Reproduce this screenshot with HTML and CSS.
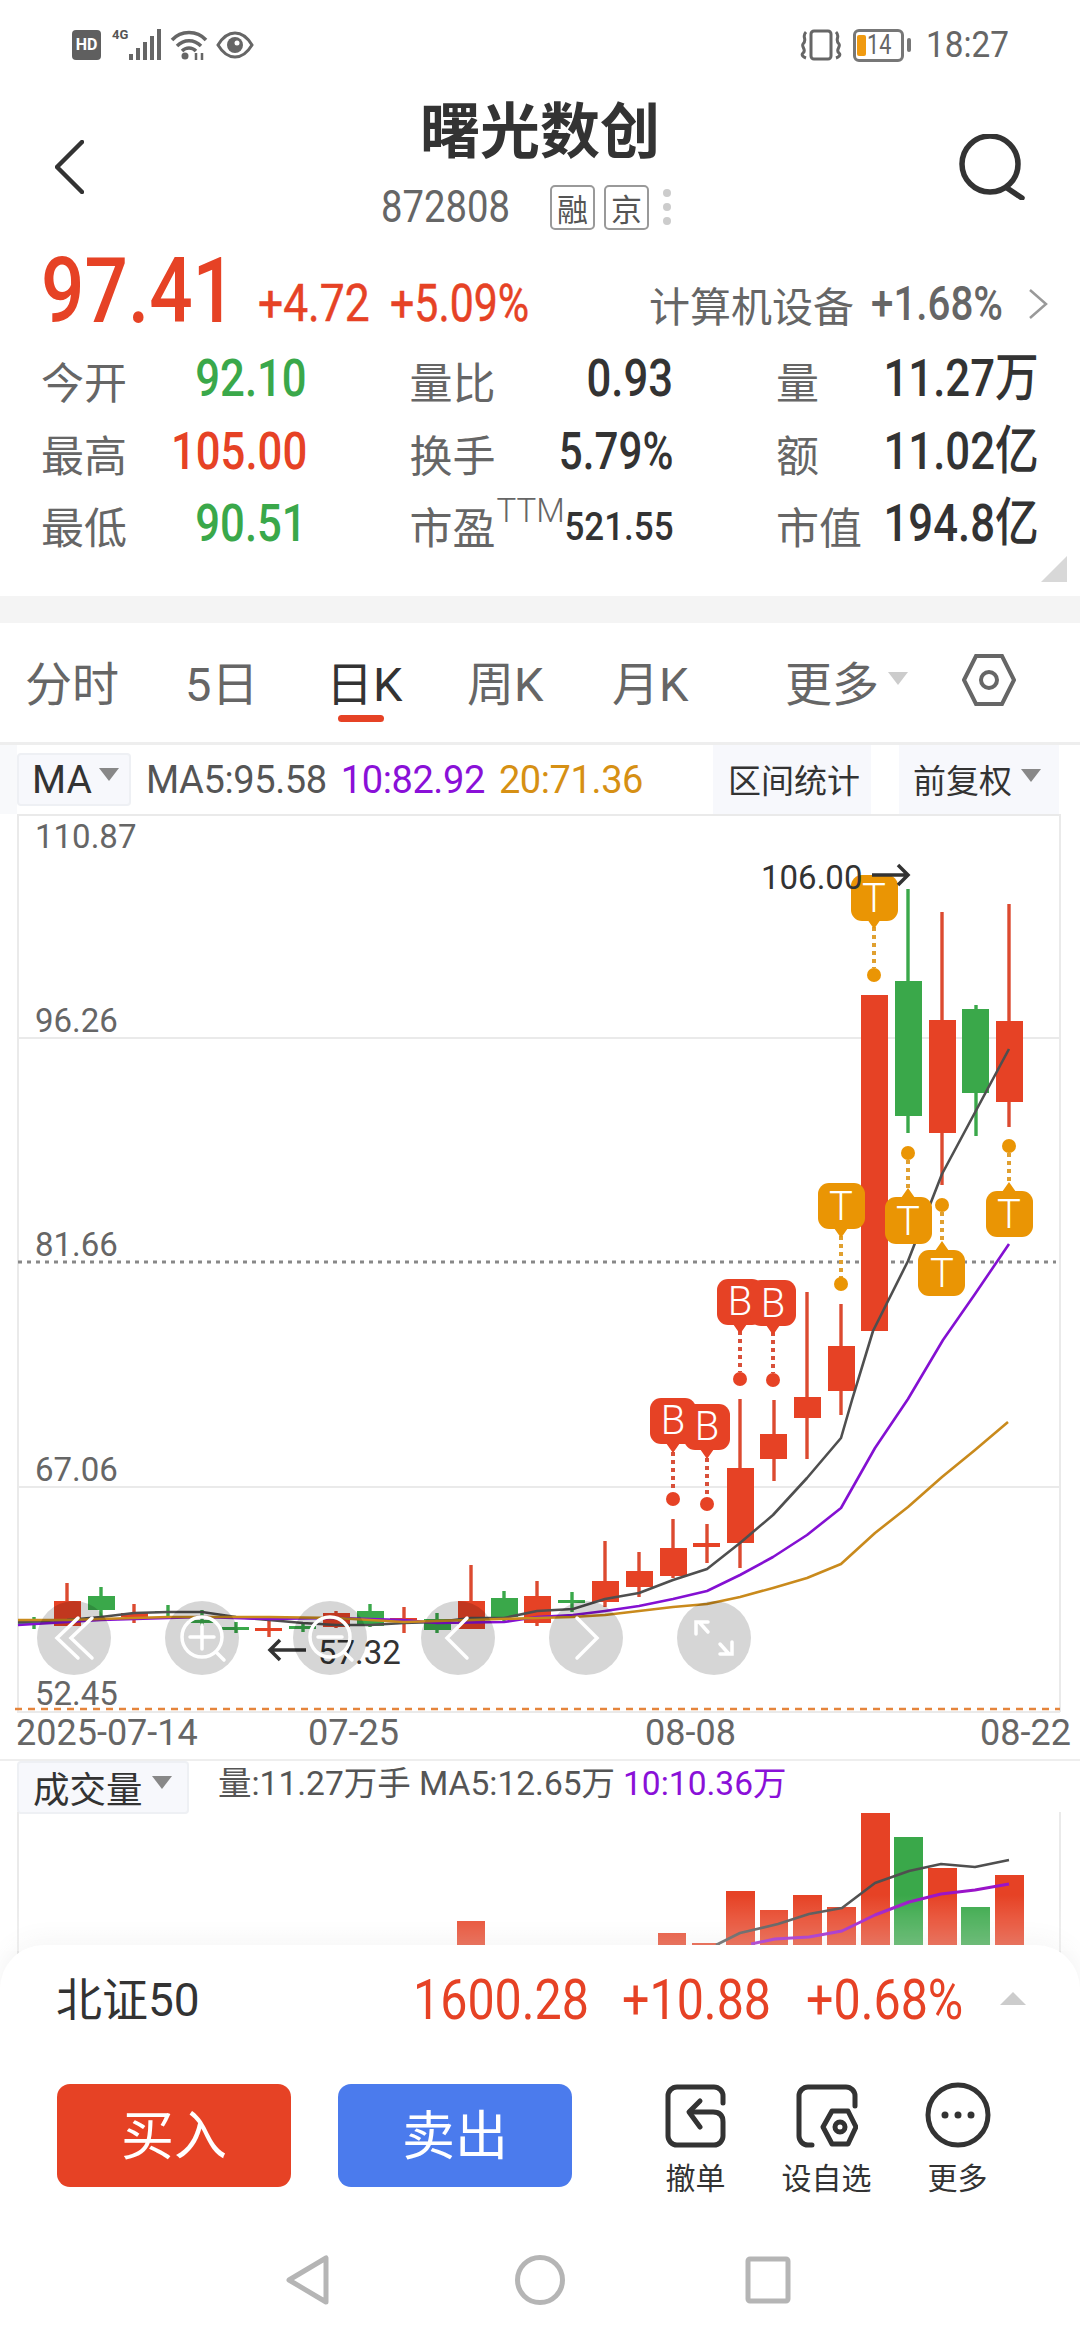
FILE: index.html
```html
<!DOCTYPE html>
<html lang="zh-CN">
<head>
<meta charset="utf-8">
<title>曙光数创</title>
<link rel="stylesheet" href="styles.css">
</head>
<body>
<div class="page">
  <div class="status">
    <div class="status-left">
      <span class="hd">HD</span>
      <span class="net"><span class="fourg">4G</span>
        <svg class="sig" width="34" height="32" viewBox="0 0 34 32"><rect x="1" y="25" width="4" height="6"/><rect x="8" y="19" width="4" height="12"/><rect x="15" y="13" width="4" height="18"/><rect x="22" y="7" width="4" height="24"/><rect x="29" y="0" width="4" height="31"/></svg>
      </span>
      <svg class="wifi" width="38" height="32" viewBox="0 0 38 32"><path d="M2 11C11 1 27 1 36 11M7 17C14 10 24 10 31 17M12 22C16 18 22 18 26 22"/><circle cx="15" cy="27" r="3.5"/><path d="M26 24V31M32 24V31" class="thin"/></svg>
      <svg class="eye" width="38" height="28" viewBox="0 0 38 28"><path d="M2 14C8 4 14 2 19 2S30 4 36 14C30 24 24 26 19 26S8 24 2 14Z"/><circle cx="19" cy="14" r="8"/><circle cx="21" cy="12" r="2.5" class="hole"/></svg>
    </div>
    <div class="status-right">
      <svg class="vib" width="42" height="32" viewBox="0 0 42 32"><rect x="11" y="2" width="20" height="28" rx="3"/><path d="M6 3C1 8 8 10 3 15C1 18 7 21 3 24C1 26 3 28 6 29M36 3C41 8 34 10 39 15C41 18 35 21 39 24C41 26 39 28 36 29"/></svg>
      <span class="batt"><span class="batt-fill"></span><span class="batt-num">14</span></span>
      <span class="batt-tip"></span>
      <span class="time"><span class="time-txt">18:27</span></span>
    </div>
  </div>

  <header class="head">
    <svg class="back" width="29" height="54" viewBox="0 0 29 54"><path d="M27 2L2 27L27 52"/></svg>
    <div class="head-mid">
      <h1 class="title">曙光数创</h1>
      <div class="code-row">
        <span class="code-slot"><span class="nar code">872808</span></span>
        <span class="tag">融</span>
        <span class="tag">京</span>
        <span class="dots"><i></i><i></i><i></i></span>
      </div>
    </div>
    <svg class="search" width="66" height="66" viewBox="0 0 66 66"><circle cx="31" cy="30" r="28"/><path d="M48 54L63 64"/></svg>
  </header>

  <section class="quote">
    <div class="price-row">
      <span class="slot slot-price"><span class="nar price">97.41</span></span>
      <span class="slot slot-a"><span class="nar chg chg-a">+4.72</span></span>
      <span class="slot slot-b"><span class="nar chg">+5.09%</span></span>
      <span class="sector">计算机设备</span>
      <span class="slot slot-c"><span class="nar sector-chg">+1.68%</span></span>
      <svg class="sector-go" width="20" height="30" viewBox="0 0 20 30"><path d="M2 1L18 15L2 29"/></svg>
    </div>
    <div class="stats">
      <div class="stat"><span class="lab">今开</span><span class="val green">92.10</span></div>
      <div class="stat"><span class="lab">量比</span><span class="val">0.93</span></div>
      <div class="stat"><span class="lab">量</span><span class="val">11.27万</span></div>
      <div class="stat"><span class="lab">最高</span><span class="val red">105.00</span></div>
      <div class="stat"><span class="lab">换手</span><span class="val val-pct">5.79%</span></div>
      <div class="stat"><span class="lab">额</span><span class="val">11.02亿</span></div>
      <div class="stat"><span class="lab">最低</span><span class="val green">90.51</span></div>
      <div class="stat"><span class="lab">市盈<sup class="ttm">TTM</sup></span><span class="val val-sm">521.55</span></div>
      <div class="stat"><span class="lab">市值</span><span class="val val-wide">194.8亿</span></div>
    </div>
    <span class="corner"></span>
  </section>

  <div class="band"></div>

  <nav class="tabs">
    <span class="tab">分时</span>
    <span class="tab">5日</span>
    <span class="tab tab-on">日K</span>
    <span class="tab">周K</span>
    <span class="tab">月K</span>
    <span class="tab">更多<i class="tri tri-tab"></i></span>
    <svg class="hex" width="54" height="54" viewBox="0 0 54 54"><path d="M2 27L14 3H40L52 27L40 51H14Z"/><circle cx="27" cy="27" r="8"/></svg>
  </nav>

  <div class="ma-row">
    <span class="picker picker-ma">MA<i class="tri"></i></span>
    <span class="ma-vals"><span class="c-gray">MA5:95.58</span><span class="c-purple">10:82.92</span><span class="c-orange">20:71.36</span></span>
    <span class="tool tool-a">区间统计</span>
    <span class="tool tool-b">前复权<i class="tri"></i></span>
  </div>

  <svg class="chart" width="1080" height="945" viewBox="0 814 1080 945">
    <g class="grid">
      <path d="M18 814V1712M1060 814V1712M17 815H1060M17 1038H1060M17 1487H1060M17 1712H1060"/>
    </g>
    <path class="dotline" d="M18 1262H1056"/>
    <path class="dashline" d="M15 1709H1060"/>
    <g class="axis">
      <text x="35" y="848">110.87</text>
      <text x="35" y="1032">96.26</text>
      <text x="35" y="1256">81.66</text>
      <text x="35" y="1481">67.06</text>
      <text x="35" y="1705">52.45</text>
    </g>
    <g class="axis dates">
      <text x="16" y="1745">2025-07-14</text>
      <text x="308" y="1745">07-25</text>
      <text x="645" y="1745">08-08</text>
      <text x="980" y="1745">08-22</text>
    </g>

    <g class="up">
      <line x1="1009" y1="904" x2="1009" y2="1127"/><rect x="996" y="1021" width="27" height="81"/>
      <line x1="942" y1="912" x2="942" y2="1185"/><rect x="929" y="1020" width="27" height="113"/>
      <rect x="861" y="995" width="27" height="336"/>
      <line x1="841" y1="1304" x2="841" y2="1415"/><rect x="828" y="1346" width="27" height="45"/>
      <line x1="807" y1="1292" x2="807" y2="1459"/><rect x="794" y="1397" width="27" height="21"/>
      <line x1="774" y1="1400" x2="774" y2="1481"/><rect x="760" y="1434" width="27" height="25"/>
      <line x1="740" y1="1399" x2="740" y2="1568"/><rect x="727" y="1468" width="27" height="75"/>
      <line x1="707" y1="1524" x2="707" y2="1563"/><rect x="693" y="1543" width="27" height="4"/>
      <line x1="673" y1="1519" x2="673" y2="1578"/><rect x="660" y="1548" width="27" height="28"/>
      <line x1="639" y1="1552" x2="639" y2="1597"/><rect x="626" y="1571" width="27" height="16"/>
      <line x1="605" y1="1541" x2="605" y2="1607"/><rect x="592" y="1581" width="27" height="21"/>
      <line x1="537" y1="1581" x2="537" y2="1626"/><rect x="524" y="1596" width="27" height="27"/>
      <line x1="471" y1="1565" x2="471" y2="1629"/><rect x="458" y="1601" width="27" height="28"/>
      <line x1="404" y1="1607" x2="404" y2="1633"/><rect x="390" y="1618" width="27" height="3"/>
      <line x1="336" y1="1611" x2="336" y2="1628"/><rect x="323" y="1613" width="27" height="14"/>
      <line x1="269" y1="1620" x2="269" y2="1637"/><rect x="255" y="1628" width="27" height="3"/>
      <line x1="134" y1="1604" x2="134" y2="1623"/><rect x="121" y="1613" width="27" height="4"/>
      <line x1="67" y1="1583" x2="67" y2="1626"/><rect x="54" y="1601" width="27" height="25"/>
    </g>
    <g class="down">
      <line x1="976" y1="1005" x2="976" y2="1136"/><rect x="962" y="1009" width="27" height="84"/>
      <line x1="908" y1="889" x2="908" y2="1133"/><rect x="895" y="981" width="27" height="135"/>
      <line x1="572" y1="1592" x2="572" y2="1612"/><rect x="558" y="1600" width="27" height="3"/>
      <line x1="504" y1="1591" x2="504" y2="1623"/><rect x="491" y="1598" width="27" height="19"/>
      <line x1="437" y1="1613" x2="437" y2="1633"/><rect x="424" y="1619" width="27" height="11"/>
      <line x1="370" y1="1604" x2="370" y2="1627"/><rect x="357" y="1611" width="27" height="15"/>
      <line x1="303" y1="1622" x2="303" y2="1632"/><rect x="289" y="1626" width="27" height="3"/>
      <line x1="236" y1="1622" x2="236" y2="1633"/><rect x="222" y="1627" width="27" height="3"/>
      <line x1="202" y1="1610" x2="202" y2="1626"/><rect x="188" y="1620" width="27" height="3"/>
      <line x1="168" y1="1605" x2="168" y2="1617"/><rect x="155" y="1611" width="27" height="2"/>
      <line x1="101" y1="1587" x2="101" y2="1617"/><rect x="88" y="1596" width="27" height="14"/>
      <line x1="34" y1="1617" x2="34" y2="1629"/><rect x="18" y="1621" width="29" height="3"/>
    </g>

    <g class="ml-b">
      <polyline points="18,1622 67,1620 101,1617 134,1613 168,1612 202,1612 236,1617 269,1620 303,1623 336,1625 370,1625 404,1623 437,1622 471,1618 504,1618 537,1611 573,1609 605,1599 639,1593 673,1580 707,1569 740,1543 773,1515 807,1478 841,1438 852,1400 873,1331 908,1261 942,1174 1009,1049"/>
    </g>
    <g class="ml-p">
      <polyline points="18,1625 101,1620 202,1617 269,1619 336,1618 404,1620 437,1623 504,1622 537,1617 573,1615 605,1611 639,1606 673,1599 707,1591 740,1575 773,1557 807,1535 841,1508 875,1448 908,1399 943,1340 975,1294 1009,1244"/>
    </g>
    <g class="ml-o">
      <polyline points="18,1620 67,1620 168,1617 269,1617 336,1618 404,1622 537,1618 572,1617 605,1615 639,1611 673,1607 707,1604 740,1597 773,1588 807,1578 841,1564 875,1533 908,1507 942,1477 975,1450 1008,1422"/>
    </g>

    <g class="mk mk-b">
      <path class="stem" d="M673 1452V1492M707 1458V1497M740 1331V1372M773 1332V1373"/>
      <circle cx="673" cy="1499" r="7"/><circle cx="707" cy="1504" r="7"/><circle cx="740" cy="1379" r="7"/><circle cx="773" cy="1380" r="7"/>
      <path d="M666 1443L673 1453L680 1443ZM700 1449L707 1459L714 1449ZM733 1324L740 1334L747 1324ZM766 1325L773 1335L780 1325Z"/>
      <rect x="650" y="1398" width="46" height="46" rx="11"/><rect x="684" y="1404" width="46" height="46" rx="11"/>
      <rect x="717" y="1279" width="46" height="46" rx="11"/><rect x="750" y="1280" width="46" height="46" rx="11"/>
      <text x="673" y="1434">B</text><text x="707" y="1440">B</text><text x="740" y="1315">B</text><text x="773" y="1317">B</text>
    </g>
    <g class="mk mk-t">
      <path class="stem" d="M874 927V968M841 1236V1278M908 1160V1192M942 1212V1245M1009 1153V1186"/>
      <circle cx="874" cy="975" r="7"/><circle cx="841" cy="1284" r="7"/><circle cx="908" cy="1153" r="7"/><circle cx="942" cy="1205" r="7"/><circle cx="1009" cy="1146" r="7"/>
      <path d="M867 919L874 929L881 919ZM834 1228L841 1238L848 1228ZM901 1198L908 1188L915 1198ZM935 1251L942 1241L949 1251ZM1002 1192L1009 1182L1016 1192Z"/>
      <rect x="851" y="875" width="47" height="46" rx="11"/><rect x="818" y="1183" width="47" height="46" rx="11"/>
      <rect x="885" y="1197" width="47" height="47" rx="11"/><rect x="918" y="1250" width="47" height="46" rx="11"/><rect x="986" y="1191" width="47" height="46" rx="11"/>
      <text x="874" y="912">T</text><text x="841" y="1220">T</text><text x="908" y="1235">T</text><text x="942" y="1287">T</text><text x="1009" y="1228">T</text>
    </g>

    <g class="note">
      <text x="761" y="889">106.00</text>
      <path d="M872 875H908M898 865L908 875L898 885"/>
      <path d="M306 1650H270M280 1640L270 1650L280 1660"/>
      <text x="318" y="1664">57.32</text>
    </g>
    <g class="ctrl">
      <circle cx="74" cy="1638" r="37"/><circle cx="202" cy="1638" r="37"/><circle cx="330" cy="1638" r="37"/><circle cx="458" cy="1638" r="37"/><circle cx="586" cy="1638" r="37"/><circle cx="714" cy="1638" r="37"/>
    </g>
    <g class="ctrl-i">
      <path d="M78 1618L57 1638L78 1658M92 1618L71 1638L92 1658"/>
      <circle cx="202" cy="1637" r="20"/><path d="M190 1637H214M202 1625V1649M216 1652L224 1660"/>
      <circle cx="330" cy="1637" r="20"/><path d="M318 1637H342M344 1652L352 1660"/>
      <path d="M467 1618L447 1638L467 1658"/>
      <path d="M577 1618L597 1638L577 1658"/>
      <path d="M699 1622L708 1632M696 1634V1622H708M729 1654L720 1644M732 1642V1654H720"/>
    </g>
  </svg>

  <section class="vol">
    <div class="vol-head">
      <span class="picker picker-vol">成交量<i class="tri"></i></span>
      <span class="vol-text"><span class="c-gray">量:11.27万手 MA5:12.65万</span><span class="c-purple">10:10.36万</span></span>
    </div>
    <svg class="vol-bars" width="1080" height="150" viewBox="0 1812 1080 150">
      <path class="grid-v" d="M18 1812V1962M1060 1812V1962"/>
      <g class="up-v">
        <rect x="457" y="1921" width="28" height="41"/><rect x="658" y="1933" width="28" height="29"/><rect x="692" y="1943" width="28" height="19"/>
        <rect x="726" y="1891" width="29" height="71"/><rect x="760" y="1910" width="28" height="52"/><rect x="793" y="1895" width="29" height="67"/>
        <rect x="827" y="1907" width="29" height="55"/><rect x="861" y="1813" width="29" height="149"/><rect x="928" y="1868" width="29" height="94"/><rect x="995" y="1875" width="29" height="87"/>
      </g>
      <g class="down-v"><rect x="894" y="1837" width="29" height="125"/><rect x="961" y="1907" width="29" height="55"/></g>
      <polyline class="ml-vb" points="716,1945 740,1933 778,1924 809,1914 842,1908 875,1883 909,1871 941,1864 975,1867 1009,1860"/>
      <polyline class="ml-vp" points="751,1944 775,1939 809,1937 842,1931 875,1915 909,1902 941,1894 975,1890 1009,1884"/>
    </svg>
  </section>

  <div class="sheet">
    <div class="index-row">
      <span class="idx-name">北证50</span>
      <span class="slot slot-ia"><span class="nar idx">1600.28</span></span>
      <span class="slot slot-ib"><span class="nar idx">+10.88</span></span>
      <span class="slot"><span class="nar idx">+0.68%</span></span>
      <i class="tri-up"></i>
    </div>
    <div class="trade-row">
      <span class="btn btn-buy">买入</span>
      <span class="btn btn-sell">卖出</span>
      <div class="act">
        <svg width="62" height="64" viewBox="0 0 62 64"><path d="M58 19V12A9 9 0 0 0 49 3H12A9 9 0 0 0 3 12V52A9 9 0 0 0 12 61H49A9 9 0 0 0 58 52V38C58 31 54 28 48 28H26"/><path d="M35 17L24 28L35 43"/></svg>
        <span>撤单</span>
      </div>
      <div class="act">
        <svg width="62" height="64" viewBox="0 0 62 64"><path d="M59 22V12A9 9 0 0 0 50 3H12A9 9 0 0 0 3 12V52A9 9 0 0 0 12 61H16"/><path d="M27 43L36 27H52L60 43L52 60H36Z"/><circle cx="44" cy="43" r="5"/></svg>
        <span>设自选</span>
      </div>
      <div class="act act-more">
        <svg width="66" height="68" viewBox="0 0 66 68"><circle cx="33" cy="34" r="30"/><circle class="dot" cx="20" cy="34" r="3.5"/><circle class="dot" cx="33" cy="34" r="3.5"/><circle class="dot" cx="46" cy="34" r="3.5"/></svg>
        <span>更多</span>
      </div>
    </div>
    <div class="sys-nav">
      <svg class="n1" width="46" height="52" viewBox="0 0 46 52"><path d="M41 4V48L4 26Z"/></svg>
      <svg class="n2" width="50" height="52" viewBox="0 0 50 52"><circle cx="25" cy="26" r="22.5"/></svg>
      <svg class="n3" width="46" height="48" viewBox="0 0 46 48"><rect x="3" y="3" width="40" height="42" rx="2"/></svg>
    </div>
  </div>
</div>
</body>
</html>
```

FILE: styles.css
```css
* { box-sizing: border-box; }
html, body { margin: 0; padding: 0; background: #fff; }
body { font-family: Roboto, "Noto Sans CJK SC", sans-serif; color: #333; }
i { font-style: normal; }
.page { position: relative; width: 1080px; height: 2340px; overflow: hidden; background: #fff; }
svg { display: block; flex: none; }

/* the app's numerals are tall and narrow */
.nar { display: inline-block; white-space: nowrap; transform: scaleX(.84); transform-origin: left center; }
.slot { display: block; flex: none; white-space: nowrap; }

/* status bar */
.status { height: 90px; padding: 0 72px; display: flex; align-items: center; justify-content: space-between; }
.status-left, .status-right { display: flex; align-items: center; }
.hd { width: 29px; height: 30px; background: #5f5f5f; color: #fff; border-radius: 4px; font: 700 16px/30px Roboto, sans-serif; text-align: center; }
.net { position: relative; width: 50px; height: 32px; margin-left: 11px; }
.fourg { position: absolute; left: 0; top: -3px; font: 700 13px/18px Roboto, sans-serif; color: #555; }
.sig { position: absolute; right: 0; top: 0; fill: #666; }
.wifi { margin-left: 8px; fill: #666; }
.wifi path { fill: none; stroke: #666; stroke-width: 3.5; }
.wifi .thin { stroke-width: 2.5; }
.eye { margin-left: 8px; }
.eye path { fill: none; stroke: #666; stroke-width: 3; }
.eye circle { fill: #666; }
.eye .hole { fill: #fff; }
.vib { margin-right: 11px; }
.vib rect, .vib path { fill: none; stroke: #666; stroke-width: 3; }
.batt { position: relative; width: 51px; height: 33px; border: 3px solid #777; border-radius: 6px; }
.batt-fill { position: absolute; left: 1px; top: 3px; bottom: 3px; width: 9px; background: #f09a10; border-radius: 2px; }
.batt-num { position: absolute; left: 11px; top: -1px; font: 400 27px/29px Roboto, sans-serif; color: #666; transform: scaleX(.8); transform-origin: left center; }
.batt-tip { width: 4px; height: 14px; margin-left: 3px; background: #777; border-radius: 2px; }
.time { margin-left: 15px; width: 82px; }
.time-txt { display: inline-block; font-size: 37px; line-height: 40px; color: #666; white-space: nowrap; transform: scaleX(.9); transform-origin: left center; }

/* title */
.head { height: 148px; padding: 0 55px; display: grid; grid-template-columns: 1fr 318px 1fr; position: relative; }
.back { margin-top: 50px; }
.back path { fill: none; stroke: #333; stroke-width: 4.5; stroke-linecap: round; stroke-linejoin: round; }
.search { margin-top: 44px; justify-self: end; }
.search circle, .search path { fill: none; stroke: #333; stroke-width: 5.5; stroke-linecap: round; }
.head-mid { display: flex; flex-direction: column; }
.title { margin: -5px 0 0; font: 700 60px/84px "Noto Sans CJK SC", sans-serif; color: #333; text-align: center; }
.code-row { display: flex; align-items: center; margin-top: 15px; height: 46px; }
.code-slot { width: 169px; flex: none; }
.code { font-size: 45px; line-height: 46px; color: #666; transform: scaleX(.85); }
.tag { flex: none; width: 45px; height: 45px; margin-right: 9px; border: 2px solid #999; border-radius: 5px; font: 400 31px/41px "Noto Sans CJK SC", sans-serif; color: #555; text-align: center; }
.dots { display: flex; flex-direction: column; gap: 6px; margin-left: 5px; }
.dots i { width: 8px; height: 8px; border-radius: 50%; background: #ccc; }

/* quote */
.quote { position: relative; height: 358px; padding: 0 41px; }
.price-row { height: 107px; display: flex; align-items: center; }
.slot-price { width: 217px; }
.slot-a { width: 132px; margin-top: 24px; }
.slot-b { width: 259px; margin-top: 24px; }
.slot-c { width: 157px; margin-top: 24px; }
.price { font: 500 91px/107px Roboto, sans-serif; color: #e64225; transform: scaleX(.84); }
.chg { font: 400 51px/60px Roboto, sans-serif; color: #e64225; -webkit-text-stroke: .5px #e64225; }
.chg-a { transform: scaleX(.87); }
.sector { width: 222px; flex: none; font: 400 41px/60px "Noto Sans CJK SC", sans-serif; color: #666; margin-top: 24px; white-space: nowrap; }
.sector-chg { font: 500 48px/60px Roboto, sans-serif; color: #666; }
.sector-go { margin-top: 24px; }
.sector-go path { fill: none; stroke: #999; stroke-width: 2.5; }
.stats { display: grid; grid-template-columns: 266px 264px 263px; column-gap: 102.5px; grid-auto-rows: 72.5px; }
.stat { display: flex; align-items: center; justify-content: space-between; white-space: nowrap; }
.lab { position: relative; flex: none; font: 400 43px/72px "Noto Sans CJK SC", sans-serif; color: #666; white-space: nowrap; margin-top: -2px; }
.val { display: inline-block; white-space: nowrap; font: 500 52px/72px Roboto, "Noto Sans CJK SC", sans-serif; color: #333; margin-top: -4px; transform: scaleX(.84); transform-origin: right center; }
.val-sm { font-size: 38px; margin-top: 2px; transform: scaleX(.92); }
.val-pct { transform: scaleX(.81); }
.val-wide { margin-left: -20px; }
.green { color: #3aa84a; }
.red { color: #e64225; }
.ttm { position: absolute; left: 87px; top: 2px; font: 300 33px/40px Roboto, sans-serif; color: #666; }
.corner { position: absolute; right: 13px; bottom: 14px; width: 0; height: 0; border-left: 26px solid transparent; border-bottom: 26px solid #d8d8d8; }
.band { height: 27px; background: #f4f4f4; }

/* tabs */
.tabs { height: 122px; border-bottom: 3px solid #eee; padding: 5px 0 0 25px; display: grid; grid-template-columns: 160px 141px 141px 145px 173px 177px 54px; align-items: center; }
.tab { position: relative; font: 400 47px/62px Roboto, "Noto Sans CJK SC", sans-serif; color: #666; }
.tab-on { color: #333; }
.tab-on::after { content: ""; position: absolute; left: 12px; top: 61px; width: 46px; height: 7px; border-radius: 4px; background: #e64225; }
.tri { display: inline-block; width: 0; height: 0; border-left: 10px solid transparent; border-right: 10px solid transparent; border-top: 13px solid #888; margin-left: 9px; vertical-align: 8px; }
.tri-tab { position: absolute; left: 103px; top: 18px; margin: 0; border-top-color: #ccc; }
.hex { margin-top: -10px; }
.hex path, .hex circle { fill: none; stroke: #666; stroke-width: 4; }

/* MA row */
.ma-row { height: 69px; border-left: 17px solid #f8f9fb; display: flex; align-items: center; position: relative; }
.picker { background: #f7f8fc; border: 2px solid #eef0f4; border-radius: 4px; display: flex; align-items: center; }
.picker .tri { margin-left: 9px; margin-top: -10px; vertical-align: 0; }
.picker-ma { flex: none; width: 114px; height: 53px; padding-left: 13px; font-size: 39px; color: #333; }
.picker-ma .tri { margin-left: 7px; }
.ma-vals { margin-left: 15px; font-size: 38px; letter-spacing: -.4px; white-space: nowrap; display: flex; gap: 14px; }
.c-gray { color: #555; }
.c-purple { color: #8a10d8; }
.c-orange { color: #d69014; }
.tool { position: absolute; top: 0; height: 69px; background: #f7f8fc; font: 400 33px/69px "Noto Sans CJK SC", sans-serif; color: #333; display: flex; align-items: center; }
.tool-a { left: 696px; width: 158px; padding-left: 15px; }
.tool-b { left: 882px; width: 160px; padding-left: 14px; }
.tool .tri { margin-left: 9px; margin-top: -8px; vertical-align: 0; }

/* chart */
.grid path { fill: none; stroke: #eaeaea; stroke-width: 2; }
.dotline { fill: none; stroke: #888; stroke-width: 3; stroke-dasharray: 4 5; }
.dashline { fill: none; stroke: #e5853c; stroke-width: 2.5; stroke-dasharray: 7 6; }
.axis text { font: 400 33px Roboto, sans-serif; fill: #666; }
.dates text { font-size: 36px; }
.up line { stroke: #dc4a30; stroke-width: 3.4; }
.up rect { fill: #e64225; }
.down line { stroke: #3aa84a; stroke-width: 3.4; }
.down rect { fill: #3aa84a; }
.ml-b polyline, .ml-p polyline, .ml-o polyline { fill: none; stroke-linejoin: round; }
.ml-b polyline { stroke: #4f4f4f; stroke-width: 2.6; }
.ml-p polyline { stroke: #8410d2; stroke-width: 2.6; }
.ml-o polyline { stroke: #c98a1c; stroke-width: 2.6; }
.mk text { font: 300 40px Roboto, sans-serif; fill: #fff; text-anchor: middle; }
.mk .stem { fill: none; stroke-width: 4; stroke-dasharray: 4 4; }
.mk-b rect, .mk-b circle, .mk-b path { fill: #e64225; }
.mk-b .stem { stroke: #d8503a; fill: none; }
.mk-t rect, .mk-t circle, .mk-t path { fill: #ea9504; }
.mk-t .stem { stroke: #e0a030; fill: none; }
.ctrl circle { fill: rgba(0, 0, 0, .16); }
.ctrl-i path, .ctrl-i circle { fill: none; stroke: #fff; stroke-width: 3.5; stroke-linecap: round; }
.note text { font: 400 33px Roboto, sans-serif; fill: #333; }
.note path { fill: none; stroke: #333; stroke-width: 3.5; }

/* volume */
.vol { position: relative; border-top: 2px solid #eee; }
.vol-head { height: 51px; padding-left: 17px; display: flex; }
.picker-vol { width: 172px; height: 53px; padding-left: 14px; font: 400 36.5px/50px "Noto Sans CJK SC", sans-serif; color: #333; }
.vol-text { margin-left: 29px; font: 400 33.5px/46px Roboto, "Noto Sans CJK SC", sans-serif; white-space: nowrap; display: flex; gap: 8px; }
.grid-v { fill: none; stroke: #eaeaea; stroke-width: 2; }
.up-v rect { fill: #e64225; }
.down-v rect { fill: #3aa84a; }
.ml-vb, .ml-vp { fill: none; stroke-linejoin: round; }
.ml-vb { stroke: #4f4f4f; stroke-width: 2.6; }
.ml-vp { stroke: #9a14c8; stroke-width: 3; }

/* bottom sheet */
.sheet { position: absolute; left: 0; right: 0; top: 1945px; bottom: 0; background: #fff; border-radius: 44px 44px 0 0; box-shadow: 0 -6px 24px rgba(0, 0, 0, .05); }
.sheet::before { content: ""; position: absolute; left: 0; right: 0; top: -50px; height: 56px; background: linear-gradient(rgba(255, 255, 255, 0), rgba(255, 255, 255, .3)); pointer-events: none; }
.index-row { position: relative; height: 110px; padding: 0 0 0 56px; display: flex; align-items: center; }
.idx-name { width: 357px; flex: none; font: 400 46px/60px Roboto, "Noto Sans CJK SC", sans-serif; color: #333; white-space: nowrap; }
.idx { font: 400 55px/60px Roboto, sans-serif; color: #e64225; transform: scaleX(.88); }
.slot-ia { width: 209px; }
.slot-ib { width: 184px; }
.tri-up { position: absolute; left: 1000px; top: 47px; width: 0; height: 0; border-left: 13px solid transparent; border-right: 13px solid transparent; border-bottom: 13px solid #ccc; }
.trade-row { height: 103px; margin-top: 29px; padding-left: 57px; display: flex; }
.btn { width: 234px; height: 103px; border-radius: 13px; color: #fff; font: 400 53px/97px "Noto Sans CJK SC", sans-serif; text-align: center; }
.btn-buy { background: #e64225; }
.btn-sell { margin-left: 47px; background: #4b7bed; }
.act { width: 131px; display: flex; flex-direction: column; align-items: center; font: 400 30px/40px "Noto Sans CJK SC", sans-serif; color: #333; }
.act:nth-child(3) { margin-left: 58px; }
.act span { margin-top: 8px; white-space: nowrap; }
.act svg path, .act svg circle { fill: none; stroke: #333; stroke-width: 5; stroke-linecap: round; stroke-linejoin: round; }
.act svg .dot { fill: #333; stroke: none; }
.act-more svg { margin-top: -3px; }
.act-more span { margin-top: 7px; }
.sys-nav { margin-top: 67px; padding-left: 285px; display: flex; align-items: center; }
.sys-nav path, .sys-nav circle, .sys-nav rect { fill: none; stroke: #b5b5b5; stroke-width: 5; stroke-linejoin: round; }
.n2 { margin-left: 184px; }
.n3 { margin-left: 180px; }
```
